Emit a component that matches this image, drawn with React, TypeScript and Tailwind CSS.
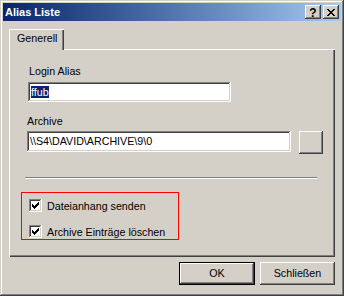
import React from "react";

const X_PATTERN = [
  "XX....XX",
  ".XX..XX.",
  "..XXXX..",
  "...XX...",
  "..XXXX..",
  ".XX..XX.",
  "XX....XX",
];

const CHECK_PATTERN = [
  "......X",
  ".....XX",
  "X...XXX",
  "XX.XXX.",
  "XXXXX..",
  ".XXX...",
  "..X....",
];

function Pixels({ pattern, className }: { pattern: string[]; className?: string }) {
  const w = pattern[0].length;
  const h = pattern.length;
  const rects: React.ReactNode[] = [];
  pattern.forEach((row, y) =>
    row.split("").forEach((c, x) => {
      if (c === "X") rects.push(<rect key={`${x}-${y}`} x={x} y={y} width={1} height={1} />);
    })
  );
  return (
    <svg width={w} height={h} viewBox={`0 0 ${w} ${h}`} shapeRendering="crispEdges" className={className} fill="#000">
      {rects}
    </svg>
  );
}

const raised =
  "shadow-[inset_-1px_-1px_#404040,inset_1px_1px_#ffffff,inset_-2px_-2px_#808080,inset_2px_2px_#d4d0c8]";
const sunken =
  "shadow-[inset_-1px_-1px_#ffffff,inset_1px_1px_#808080,inset_-2px_-2px_#d4d0c8,inset_2px_2px_#404040]";

function Checkbox() {
  return (
    <div className={`w-[13px] h-[13px] bg-white ${sunken} flex items-start justify-start pl-[3px] pt-[3px]`}>
      <Pixels pattern={CHECK_PATTERN} />
    </div>
  );
}

export default function App() {
  return (
    <div className="w-[344px] h-[296px] bg-[#d4d0c8] text-black font-['Liberation_Sans',Arial,sans-serif] text-[10.7px] leading-[13px] shadow-[inset_-1px_-1px_#404040,inset_1px_1px_#d4d0c8,inset_-2px_-2px_#808080,inset_2px_2px_#ffffff] p-[3px] flex flex-col">
      {/* Title bar */}
      <div className="h-[18px] bg-linear-to-r from-[#0a246a] to-[#a6caf0] flex items-center pl-[2px] pr-[2px]">
        <span className="text-white font-bold text-[11px] leading-[13px] flex-1">Alias Liste</span>
        <div className="flex gap-[2px]">
          <div className={`w-[16px] h-[14px] bg-[#d4d0c8] ${raised} flex items-center justify-center font-bold text-[12px] leading-[12px] pt-[1px]`}>
            ?
          </div>
          <div className={`w-[16px] h-[14px] bg-[#d4d0c8] ${raised} flex items-center justify-center`}>
            <Pixels pattern={X_PATTERN} />
          </div>
        </div>
      </div>

      {/* Content */}
      <div className="flex flex-col pl-[6px] pt-[8px]">
        <div className="relative z-10 w-[55px] h-[21px] -mb-px bg-[#d4d0c8] shadow-[inset_1px_1px_#ffffff,inset_-1px_0_#404040,inset_-2px_0_#808080] pl-[8px] pt-[3px]">
          Generell
        </div>
        <div className="w-[326px] h-[208px] shadow-[inset_1px_1px_#ffffff,inset_-1px_-1px_#404040,inset_-2px_-2px_#808080] flex flex-col items-start">
          <div className="ml-[20px] mt-[16px]">Login Alias</div>
          <div className={`ml-[19px] mt-[4px] w-[203px] h-[20px] bg-white ${sunken} pl-[3px] pt-[4px]`}>
            <span className="bg-[#0a246a] text-white">ffub</span>
          </div>
          <div className="ml-[18px] mt-[13px]">Archive</div>
          <div className="ml-[18px] mt-[3px] flex items-start gap-[8px]">
            <div className={`w-[264px] h-[21px] bg-white ${sunken} pl-[3px] pt-[4px]`}>
              {"\\\\S4\\DAVID\\ARCHIVE\\9\\0"}
            </div>
            <div className={`w-[24px] h-[23px] bg-[#d4d0c8] ${raised}`} />
          </div>
          <div className="ml-[16px] mt-[23px] w-[292px] h-[2px] border-t border-t-[#808080] border-b border-b-white" />
          <div className="ml-[12px] mt-[13px] w-[158px] h-[48px] border border-[#ff0000] pl-[7px] pt-[5px] flex flex-col gap-[11px]">
            <div className="flex items-center gap-[5px]">
              <Checkbox />
              <span className="pt-[2px]">Dateianhang senden</span>
            </div>
            <div className="flex items-center gap-[5px]">
              <Checkbox />
              <span className="pt-[2px]">Archive Einträge löschen</span>
            </div>
          </div>
        </div>
        <div className="w-[326px] mt-[5px] flex justify-end gap-[5px]">
          <div className="w-[76px] h-[23px] bg-[#d4d0c8] shadow-[inset_0_0_0_1px_#000000,inset_-2px_-2px_#404040,inset_2px_2px_#ffffff,inset_-3px_-3px_#808080] flex items-center justify-center">
            OK
          </div>
          <div className={`w-[75px] h-[23px] bg-[#d4d0c8] ${raised} flex items-center justify-center`}>
            Schließen
          </div>
        </div>
      </div>
    </div>
  );
}
